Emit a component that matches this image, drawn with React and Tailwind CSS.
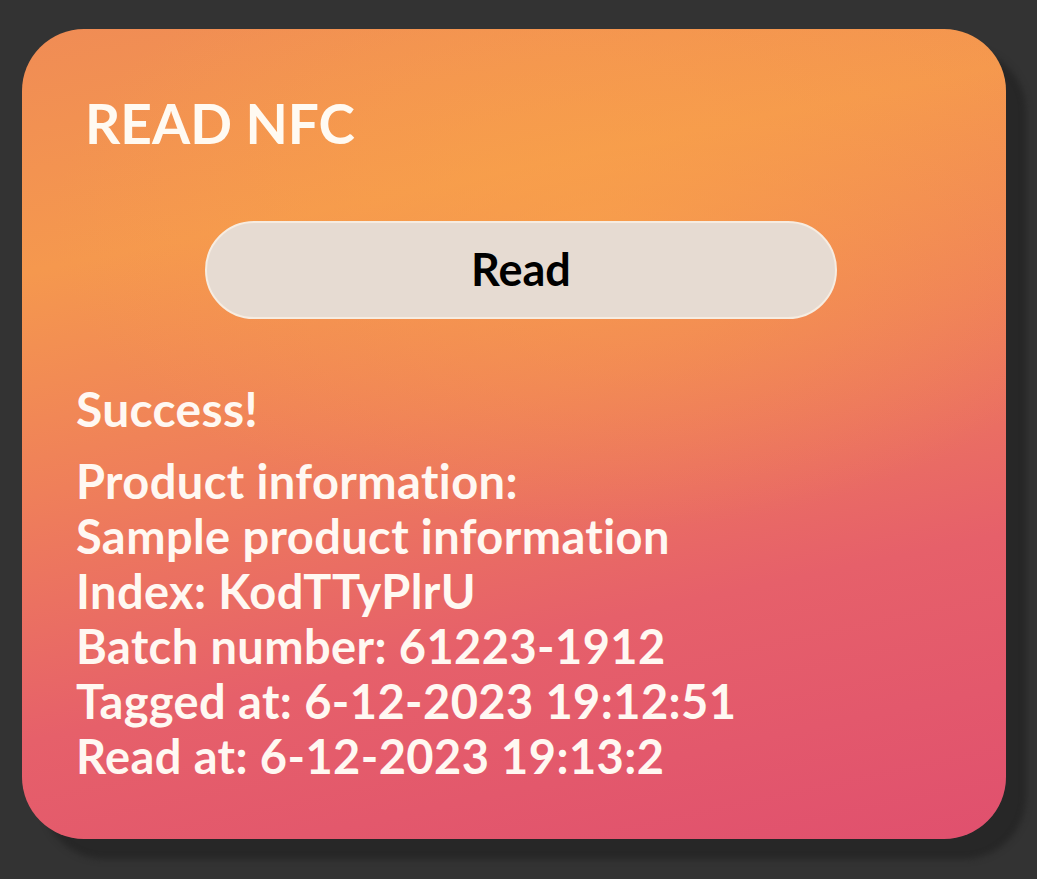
export default function App() {
  return (
    <div className="min-h-[879px] w-full bg-[#333333] pl-[22px] pt-[29px] [font-variant-ligatures:none]" style={{ fontFamily: "Lato, 'Noto Sans', sans-serif" }}>
      <div className="relative w-[984px] h-[810px] rounded-[62px] shadow-[20px_20px_6px_#272727] overflow-hidden bg-[linear-gradient(168deg,#f08c55_0%,#f5984e_24%,#ef7f5a_46%,#e6606a_70%,#e0506e_100%)]">
        <div className="absolute inset-0 bg-[radial-gradient(ellipse_55%_38%_at_58%_24%,rgba(250,165,72,0.6),rgba(250,165,72,0)_100%)]" />
        <div className="relative flex flex-col">
          <h1 className="ml-[63px] mt-[62px] text-[55px] leading-[64px] font-bold text-[#fffaf2]">READ NFC</h1>
          <div className="flex justify-center mt-[66px]">
            <button className="ml-[14px] w-[632px] h-[98px] rounded-full bg-[#e6dbd2] border-2 border-[#f6ece1] text-[45px] font-bold text-black">Read</button>
          </div>
          <div className="ml-[54px] mt-[62px] text-[#fff8f2] font-bold">
            <p className="text-[48px] leading-[55px] tracking-[0.3px]">Success!</p>
            <div className="mt-[18px] text-[47px] leading-[55px] tracking-[0.4px]">
              <p>Product information:</p>
              <p>Sample product information</p>
              <p>Index: KodTTyPlrU</p>
              <p>Batch number: 61223-1912</p>
              <p>Tagged at: 6-12-2023 19:12:51</p>
              <p>Read at: 6-12-2023 19:13:2</p>
            </div>
          </div>
        </div>
      </div>
    </div>
  );
}
